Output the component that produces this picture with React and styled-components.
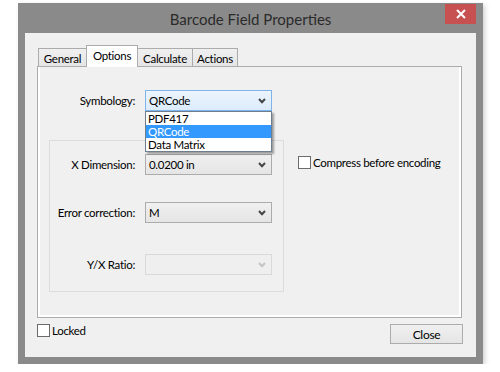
import React from "react";
import styled, { createGlobalStyle, css } from "styled-components";

const FONT = `Lato, "Noto Sans", sans-serif`;

const Global = createGlobalStyle`
  html, body { margin: 0; padding: 0; background: #ffffff; }
  body { font-family: ${FONT}; font-size: 11.5px; letter-spacing: -0.3px; color: #000; }
  * { box-sizing: border-box; }
`;

const Frame = styled.div`
  margin: 3px 0 0 18px;
  width: 465px;
  height: 361px;
  background: #8a8a8a;
  padding: 0 7px 7px 7px;
  display: flex;
  flex-direction: column;
  box-shadow: 2px 2px 5px rgba(0, 0, 0, 0.18);
`;

const TitleBar = styled.div`
  height: 30px;
  display: grid;
  grid-template-columns: 1fr auto 1fr;
`;

const Title = styled.div`
  grid-column: 2;
  align-self: center;
  font-size: 15px;
  letter-spacing: 0;
  color: #2a2a2a;
  white-space: nowrap;
  margin-top: 1px;
`;

const CloseX = styled.div`
  grid-column: 3;
  justify-self: end;
  margin-top: 1px;
  width: 31px;
  height: 20px;
  background: #c75050;
  display: flex;
  align-items: center;
  justify-content: center;
`;

const Body = styled.div`
  flex: 1;
  background: #f0f0f0;
  padding: 12px 14px 0 12px;
  display: flex;
  flex-direction: column;
`;

const TabStrip = styled.div`
  display: flex;
  align-items: flex-end;
  height: 21px;
  padding-left: 2px;
  position: relative;
  z-index: 1;
`;

const Tab = styled.div`
  width: ${(p) => p.$w}px;
  height: 18px;
  border: 1px solid #acacac;
  border-bottom: none;
  margin-left: -1px;
  background: linear-gradient(#f0f0f0, #e5e5e5);
  display: flex;
  align-items: center;
  justify-content: center;
  white-space: nowrap;
  padding-top: 2px;
  ${(p) =>
    p.$active &&
    css`
      height: 22px;
      margin-bottom: -1px;
      background: #ffffff;
      padding-top: 0;
      padding-bottom: 3px;
    `}
`;

const Panel = styled.div`
  height: 252px;
  border: 1px solid #acacac;
  background: #ffffff;
  padding: 0 2px 2px 2px;
  display: flex;
`;

const PanelInner = styled.div`
  flex: 1;
  background: #f0f0f0;
  padding: 23px 0 0 9px;
  display: flex;
  flex-direction: column;
`;

const FieldRow = styled.div`
  display: grid;
  grid-template-columns: ${(p) => p.$label || 86}px 127px;
  column-gap: 10px;
  align-items: center;
  margin-top: ${(p) => p.$top || 0}px;
  position: relative;
  z-index: ${(p) => (p.$raised ? 3 : "auto")};
`;

const Label = styled.div`
  text-align: right;
  white-space: nowrap;
`;

const SelectWrap = styled.div`
  position: relative;
`;

const SelectBox = styled.div`
  height: 21px;
  border: 1px solid #acacac;
  background: linear-gradient(#f0f0f0, #e5e5e5);
  display: flex;
  align-items: center;
  justify-content: space-between;
  padding: 0 5px 0 3px;
  white-space: nowrap;
  ${(p) =>
    p.$focus &&
    css`
      border-color: #7eb4ea;
      background: linear-gradient(#ecf4fc, #dcecfc);
    `}
  ${(p) =>
    p.$disabled &&
    css`
      border-color: #d9d9d9;
      background: #efefef;
    `}
`;

const DropList = styled.div`
  position: absolute;
  left: 0;
  top: 100%;
  width: 127px;
  border: 1px solid #6f7e8f;
  background: #ffffff;
  box-shadow: 2px 2px 2px rgba(0, 0, 0, 0.35);
  z-index: 5;
`;

const DropItem = styled.div`
  height: 13px;
  line-height: 13px;
  padding-left: 2px;
  white-space: nowrap;
  ${(p) =>
    p.$selected &&
    css`
      background: #3399ff;
      color: #ffffff;
    `}
`;

const Lower = styled.div`
  display: flex;
  margin-top: 29px;
  align-items: flex-start;
`;

const GroupBox = styled.div`
  width: 235px;
  height: 152px;
  border: 1px solid #dcdcdc;
  padding-top: 13px;
  display: flex;
  flex-direction: column;
`;

const CheckRow = styled.label`
  display: flex;
  align-items: center;
  gap: 2px;
  white-space: nowrap;
  margin: ${(p) => p.$margin || "0"};
`;

const Box = styled.span`
  width: 13px;
  height: 13px;
  border: 1px solid #6b6b6b;
  background: #ffffff;
  flex: none;
`;

const BottomRow = styled.div`
  display: flex;
  justify-content: space-between;
  align-items: flex-start;
  margin-top: 6px;
  margin-right: -1px;
`;

const Button = styled.div`
  width: 73px;
  height: 20px;
  border: 1px solid #acacac;
  background: linear-gradient(#f0f0f0, #e5e5e5);
  display: flex;
  align-items: center;
  justify-content: center;
  font-size: 12px;
`;

const Arrow = ({ color = "#444" }) => (
  <svg width="8" height="6" viewBox="0 0 8 6">
    <polyline points="1,1 4,4.2 7,1" fill="none" stroke={color} strokeWidth="2" />
  </svg>
);

const XIcon = () => (
  <svg width="10" height="10" viewBox="0 0 10 10">
    <path d="M1 1 L9 9 M9 1 L1 9" stroke="#fff" strokeWidth="2" />
  </svg>
);

const Select = ({ value, focus, disabled, children }) => (
  <SelectWrap>
    <SelectBox $focus={focus} $disabled={disabled}>
      <span>{value}</span>
      <Arrow color={disabled ? "#c4c4c4" : "#444"} />
    </SelectBox>
    {children}
  </SelectWrap>
);

export default function App() {
  return (
    <>
      <Global />
      <Frame>
        <TitleBar>
          <Title>Barcode Field Properties</Title>
          <CloseX>
            <XIcon />
          </CloseX>
        </TitleBar>
        <Body>
          <TabStrip>
            <Tab $w={49}>General</Tab>
            <Tab $w={52} $active>
              Options
            </Tab>
            <Tab $w={56}>Calculate</Tab>
            <Tab $w={46}>Actions</Tab>
          </TabStrip>
          <Panel>
            <PanelInner>
              <FieldRow $raised>
                <Label>Symbology:</Label>
                <Select value="QRCode" focus>
                  <DropList>
                    <DropItem>PDF417</DropItem>
                    <DropItem $selected>QRCode</DropItem>
                    <DropItem>Data Matrix</DropItem>
                  </DropList>
                </Select>
              </FieldRow>
              <Lower>
                <GroupBox>
                  <FieldRow $label={85}>
                    <Label>X Dimension:</Label>
                    <Select value="0.0200 in" />
                  </FieldRow>
                  <FieldRow $label={85} $top={27}>
                    <Label>Error correction:</Label>
                    <Select value="M" />
                  </FieldRow>
                  <FieldRow $label={85} $top={31}>
                    <Label>Y/X Ratio:</Label>
                    <Select value="" disabled />
                  </FieldRow>
                </GroupBox>
                <CheckRow $margin="16px 0 0 14px">
                  <Box />
                  Compress before encoding
                </CheckRow>
              </Lower>
            </PanelInner>
          </Panel>
          <BottomRow>
            <CheckRow>
              <Box />
              Locked
            </CheckRow>
            <Button>Close</Button>
          </BottomRow>
        </Body>
      </Frame>
    </>
  );
}
